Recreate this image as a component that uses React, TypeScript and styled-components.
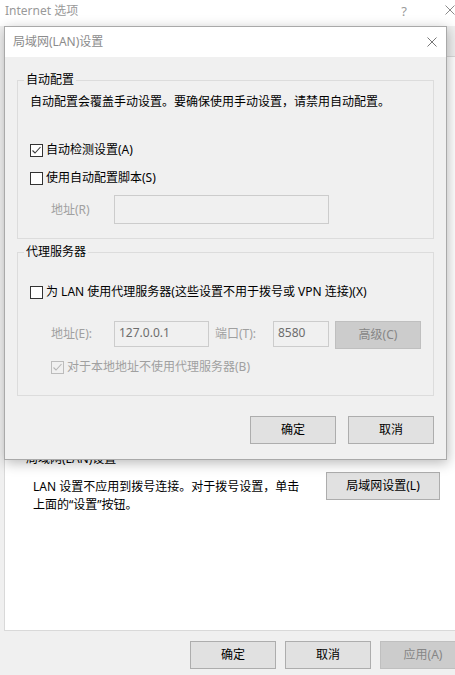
import React from "react";
import styled, { createGlobalStyle } from "styled-components";

const FONT = `"Noto Sans", "Noto Sans CJK SC", sans-serif`;

const GlobalStyle = createGlobalStyle`
  html, body { margin: 0; padding: 0; }
  body { width: 455px; height: 675px; overflow: hidden; background: #f0f0f0; font-family: ${FONT}; font-size: 12px; }
  * { box-sizing: border-box; }
`;

const Window = styled.div`
  position: relative;
  width: 455px;
  height: 675px;
  overflow: hidden;
  background: #f0f0f0;
  display: flex;
  flex-direction: column;
  font-family: ${FONT};
  font-size: 12px;
  color: #000;
`;

const TitleBar = styled.div`
  height: 26px;
  flex: 0 0 26px;
  background: #fff;
  display: flex;
  align-items: flex-start;
  padding: 3px 0 0 5px;
`;

const TitleText = styled.span<{ $color?: string }>`
  line-height: 16px;
  color: ${(p) => p.$color || "#999"};
  white-space: nowrap;
`;

const Spacer = styled.span`
  flex: 1;
`;

const HelpMark = styled.span`
  font-size: 13px;
  line-height: 16px;
  color: #9a9a9a;
  margin-right: 38px;
`;

const CloseBox = styled.span<{ $mr?: number; $mt?: number }>`
  display: inline-flex;
  margin-right: ${(p) => p.$mr ?? 0}px;
  margin-top: ${(p) => p.$mt ?? 0}px;
  flex: 0 0 auto;
`;

const TabStrip = styled.div`
  height: 30px;
  flex: 0 0 30px;
`;

const Panel = styled.div`
  margin-left: 4px;
  width: 470px;
  height: 575px;
  flex: 0 0 575px;
  background: #fff;
  border: 1px solid #d9d9d9;
  padding: 394px 0 0 21px;
`;

const PlainTitle = styled.div`
  line-height: 16px;
`;

const LanRow = styled.div`
  display: grid;
  grid-template-columns: 293px 114px;
  margin: 5px 0 0 7px;
`;

const LanText = styled.div`
  padding-top: 6px;
  line-height: 18px;
`;

const Footer = styled.div`
  flex: 1;
  display: flex;
  gap: 9px;
  padding: 10px 0 0 190px;
`;

const Button = styled.button<{ $w?: number; $h?: number; $disabled?: boolean }>`
  flex: 0 0 auto;
  width: ${(p) => p.$w ?? 86}px;
  height: ${(p) => p.$h ?? 28}px;
  padding: 0;
  font-family: ${FONT};
  font-size: 12px;
  line-height: 16px;
  color: ${(p) => (p.$disabled ? "#868686" : "#000")};
  background: ${(p) => (p.$disabled ? "#cccccc" : "#e1e1e1")};
  border: 1px solid ${(p) => (p.$disabled ? "#bfbfbf" : "#adadad")};
  border-radius: 0;
  white-space: nowrap;
`;

const Dialog = styled.div`
  position: absolute;
  left: 4px;
  top: 26px;
  width: 443px;
  height: 434px;
  background: #f0f0f0;
  border: 1px solid #a9a9a9;
  box-shadow: 1px 3px 12px rgba(0, 0, 0, 0.28);
  display: flex;
  flex-direction: column;
`;

const DialogTitleBar = styled.div`
  height: 30px;
  flex: 0 0 30px;
  background: #fff;
  display: flex;
  align-items: center;
  padding-left: 8px;
`;

const DialogBody = styled.div`
  display: flex;
  flex-direction: column;
  padding: 23px 12px 0 12px;
`;

const Group = styled.div<{ $pt: number; $pb: number; $mt?: number }>`
  position: relative;
  border: 1px solid #dcdcdc;
  padding: ${(p) => p.$pt}px 12px ${(p) => p.$pb}px 12px;
  margin-top: ${(p) => p.$mt ?? 0}px;
  display: flex;
  flex-direction: column;
`;

const GroupTitle = styled.span`
  position: absolute;
  top: -9px;
  left: 6px;
  padding: 0 2px;
  line-height: 16px;
  background: #f0f0f0;
`;

const Desc = styled.div`
  line-height: 16px;
  white-space: nowrap;
`;

const CheckRow = styled.label<{ $mt: number; $indent?: number; $disabled?: boolean }>`
  display: flex;
  align-items: center;
  gap: 3px;
  height: 16px;
  line-height: 16px;
  margin-top: ${(p) => p.$mt}px;
  padding-left: ${(p) => p.$indent ?? 0}px;
  color: ${(p) => (p.$disabled ? "#a0a0a0" : "#000")};
  white-space: nowrap;
`;

const Box = styled.span<{ $disabled?: boolean }>`
  width: 13px;
  height: 13px;
  flex: 0 0 13px;
  border: 1px solid ${(p) => (p.$disabled ? "#bcbcbc" : "#333")};
  background: ${(p) => (p.$disabled ? "#f0f0f0" : "#fff")};
  display: inline-flex;
`;

const FieldRow = styled.div<{ $mt: number }>`
  display: flex;
  align-items: flex-start;
  margin-top: ${(p) => p.$mt}px;
  padding-left: 21px;
`;

const FieldLabel = styled.span<{ $w: number; $h: number; $ml?: number }>`
  flex: 0 0 ${(p) => p.$w}px;
  width: ${(p) => p.$w}px;
  line-height: ${(p) => p.$h}px;
  margin-left: ${(p) => p.$ml ?? 0}px;
  color: #a0a0a0;
  white-space: nowrap;
`;

const TextBox = styled.div<{ $w: number; $h: number }>`
  flex: 0 0 ${(p) => p.$w}px;
  width: ${(p) => p.$w}px;
  height: ${(p) => p.$h}px;
  border: 1px solid #cccccc;
  background: #f0f0f0;
  color: #6d6d6d;
  padding: 0 4px;
  line-height: ${(p) => p.$h - 4}px;
  white-space: nowrap;
`;

const ButtonRow = styled.div`
  display: flex;
  justify-content: flex-end;
  gap: 12px;
  margin-top: 20px;
`;

const CloseIcon = ({ color, size = 10 }: { color: string; size?: number }) => (
  <svg width={size} height={size} viewBox="0 0 10 10">
    <path d="M0.5 0.5 L9.5 9.5 M9.5 0.5 L0.5 9.5" stroke={color} strokeWidth="1" fill="none" />
  </svg>
);

const Check = ({ color }: { color: string }) => (
  <svg width="11" height="11" viewBox="0 0 11 11">
    <path d="M1.5 5.5 L4 8 L9.5 2" stroke={color} strokeWidth="1.1" fill="none" />
  </svg>
);

const CheckBox = ({ checked, disabled }: { checked?: boolean; disabled?: boolean }) => (
  <Box $disabled={disabled}>{checked && <Check color={disabled ? "#b5b5b5" : "#3a3a3a"} />}</Box>
);

export default function App() {
  return (
    <>
      <GlobalStyle />
      <Window>
        <TitleBar>
          <TitleText>Internet 选项</TitleText>
          <Spacer />
          <HelpMark>?</HelpMark>
          <CloseBox $mt={2}>
            <CloseIcon color="#8a8a8a" />
          </CloseBox>
        </TitleBar>
        <TabStrip />
        <Panel>
          <PlainTitle>局域网(LAN)设置</PlainTitle>
          <LanRow>
            <LanText>
              LAN 设置不应用到拨号连接。对于拨号设置，单击
              <br />
              上面的“设置”按钮。
            </LanText>
            <Button $w={114}>局域网设置(L)</Button>
          </LanRow>
        </Panel>
        <Footer>
          <Button>确定</Button>
          <Button>取消</Button>
          <Button $disabled>应用(A)</Button>
        </Footer>

        <Dialog>
          <DialogTitleBar>
            <TitleText $color="#8c8c8c">局域网(LAN)设置</TitleText>
            <Spacer />
            <CloseBox $mr={9}>
              <CloseIcon color="#777" />
            </CloseBox>
          </DialogTitleBar>
          <DialogBody>
            <Group $pt={13} $pb={14}>
              <GroupTitle>自动配置</GroupTitle>
              <Desc>自动配置会覆盖手动设置。要确保使用手动设置，请禁用自动配置。</Desc>
              <CheckRow $mt={32}>
                <CheckBox checked />
                自动检测设置(A)
              </CheckRow>
              <CheckRow $mt={12}>
                <CheckBox />
                使用自动配置脚本(S)
              </CheckRow>
              <FieldRow $mt={9}>
                <FieldLabel $w={63} $h={29}>地址(R)</FieldLabel>
                <TextBox $w={215} $h={29} />
              </FieldRow>
            </Group>
            <Group $pt={31} $pb={20} $mt={13}>
              <GroupTitle>代理服务器</GroupTitle>
              <CheckRow $mt={0}>
                <CheckBox />
                为 LAN 使用代理服务器(这些设置不用于拨号或 VPN 连接)(X)
              </CheckRow>
              <FieldRow $mt={21}>
                <FieldLabel $w={63} $h={26}>地址(E):</FieldLabel>
                <TextBox $w={95} $h={26}>127.0.0.1</TextBox>
                <FieldLabel $w={58} $h={26} $ml={6}>端口(T):</FieldLabel>
                <TextBox $w={56} $h={26}>8580</TextBox>
                <Button $w={86} $h={28} $disabled style={{ marginLeft: 6 }}>
                  高级(C)
                </Button>
              </FieldRow>
              <CheckRow $mt={10} $indent={21} $disabled>
                <CheckBox checked disabled />
                对于本地地址不使用代理服务器(B)
              </CheckRow>
            </Group>
            <ButtonRow>
              <Button>确定</Button>
              <Button>取消</Button>
            </ButtonRow>
          </DialogBody>
        </Dialog>
      </Window>
    </>
  );
}
